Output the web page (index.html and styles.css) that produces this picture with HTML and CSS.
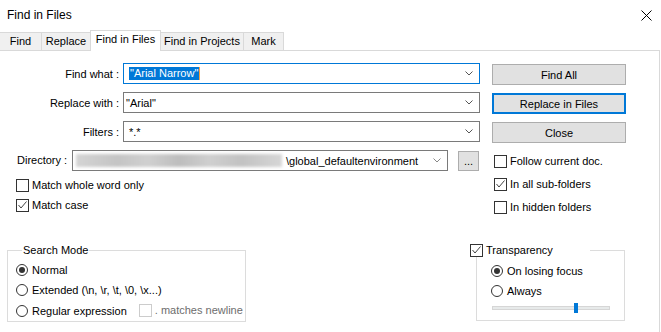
FILE: index.html
```html
<!DOCTYPE html>
<html lang="en">

<head>
    <meta charset="UTF-8">
    <meta name="viewport" content="width=device-width, initial-scale=1.0">
    <title>Find in Files</title>
    <link rel="stylesheet" href="styles.css">
</head>

<body>
    <div class="dialog">
        <div class="titlebar">
            <span class="title">Find in Files</span>
            <svg class="close" width="11" height="11" viewBox="0 0 11 11">
                <path d="M0.5 0.5 L10.5 10.5 M10.5 0.5 L0.5 10.5" stroke="#000" stroke-width="1" fill="none" />
            </svg>
        </div>

        <div class="tabs">
            <div class="tab w-find">Find</div>
            <div class="tab w-replace">Replace</div>
            <div class="tab active w-files">Find in Files</div>
            <div class="tab w-projects">Find in Projects</div>
            <div class="tab w-mark">Mark</div>
        </div>

        <div class="panel">
            <div class="fields">
                <label class="lbl">Find what :</label>
                <div class="combo focus">
                    <span class="sel">"Arial Narrow"</span><span class="caret"></span>
                    <svg class="chev" width="8" height="5" viewBox="0 0 8 5"><path d="M0.5 0.5 L4 4 L7.5 0.5" stroke="#555" fill="none" /></svg>
                </div>
                <button class="btn">Find All</button>

                <label class="lbl">Replace with :</label>
                <div class="combo tight">
                    <span>"Arial"</span>
                    <svg class="chev" width="8" height="5" viewBox="0 0 8 5"><path d="M0.5 0.5 L4 4 L7.5 0.5" stroke="#555" fill="none" /></svg>
                </div>
                <button class="btn default">Replace in Files</button>

                <label class="lbl">Filters :</label>
                <div class="combo">
                    <span>*.*</span>
                    <svg class="chev" width="8" height="5" viewBox="0 0 8 5"><path d="M0.5 0.5 L4 4 L7.5 0.5" stroke="#555" fill="none" /></svg>
                </div>
                <button class="btn">Close</button>
            </div>

            <div class="middle">
                <div class="left">
                    <div class="dir-row">
                        <label class="dir-lbl">Directory :</label>
                        <div class="combo dir">
                            <span class="blurred"></span>
                            <span class="path">\global_defaultenvironment</span>
                            <svg class="chev" width="8" height="5" viewBox="0 0 8 5"><path d="M0.5 0.5 L4 4 L7.5 0.5" stroke="#888" fill="none" /></svg>
                        </div>
                        <button class="btn dots">...</button>
                    </div>
                    <div class="checks left-checks">
                        <label class="check"><span class="box"></span>Match whole word only</label>
                        <label class="check"><span class="box"><svg width="11" height="11" viewBox="0 0 11 11"><path d="M1.5 5 L4 8 L9.5 1.5" stroke="#444" fill="none" /></svg></span>Match case</label>
                    </div>
                </div>
                <div class="checks right-checks">
                    <label class="check"><span class="box"></span>Follow current doc.</label>
                    <label class="check"><span class="box"><svg width="11" height="11" viewBox="0 0 11 11"><path d="M1.5 5 L4 8 L9.5 1.5" stroke="#444" fill="none" /></svg></span>In all sub-folders</label>
                    <label class="check"><span class="box"></span>In hidden folders</label>
                </div>
            </div>

            <div class="bottom">
                <fieldset class="group mode">
                    <legend>Search Mode</legend>
                    <div class="radios">
                        <label class="radio"><span class="dot on"></span>Normal</label>
                        <label class="radio"><span class="dot"></span>Extended (\n, \r, \t, \0, \x...)</label>
                        <div class="regex-row">
                            <label class="radio"><span class="dot"></span>Regular expression</label>
                            <label class="check disabled"><span class="box"></span>. matches newline</label>
                        </div>
                    </div>
                </fieldset>

                <div class="trans">
                    <div class="trans-head">
                        <label class="check trans-check"><span class="box"><svg width="11" height="11" viewBox="0 0 11 11"><path d="M1.5 5 L4 8 L9.5 1.5" stroke="#444" fill="none" /></svg></span>Transparency</label>
                        <span class="trans-line"></span>
                    </div>
                    <div class="trans-body">
                        <div class="radios">
                            <label class="radio"><span class="dot on"></span>On losing focus</label>
                            <label class="radio"><span class="dot"></span>Always</label>
                        </div>
                        <div class="slider"><span class="thumb"></span></div>
                    </div>
                </div>
            </div>
        </div>
    </div>
</body>

</html>
```

FILE: styles.css
```css
* {
    box-sizing: border-box;
}

body {
    margin: 0;
    background-color: white;
    font-family: "Liberation Sans", Arial, sans-serif;
    font-size: 11px;
    color: black;
    overflow: hidden;
}

.dialog {
    width: 661px;
    height: 332px;
}

.titlebar {
    height: 30px;
    display: flex;
    align-items: center;
    justify-content: space-between;
    padding: 0 9px 0 7px;
}

.title {
    font-size: 12px;
}

/* tabs */
.tabs {
    display: flex;
    align-items: flex-end;
    height: 20px;
    position: relative;
    z-index: 1;
}

.tab {
    height: 18px;
    line-height: 17px;
    text-align: center;
    background-color: #f0f0f0;
    border: 1px solid #d9d9d9;
    border-bottom: none;
    border-left: none;
}

.tab.active {
    height: 21px;
    line-height: 17px;
    margin-bottom: -1px;
    background-color: white;
    border-left: 1px solid #d9d9d9;
    margin-left: -1px;
}

.w-find { width: 42px; }
.w-replace { width: 49px; }
.w-files { width: 71px; }
.w-projects { width: 83px; }
.w-mark { width: 40px; }

.panel {
    width: 660px;
    height: 290px;
    border-top: 1px solid #d9d9d9;
    border-right: 1px solid #d9d9d9;
    padding-top: 12px;
}

/* find / replace / filters */
.fields {
    display: grid;
    grid-template-columns: 119px 357px 142px;
    grid-auto-rows: 21px;
    column-gap: 4px;
    row-gap: 8px;
}

.lbl {
    text-align: right;
    align-self: center;
}

.combo {
    position: relative;
    display: flex;
    align-items: center;
    height: 21px;
    border: 1px solid #7a7a7a;
    padding: 0 6px 0 5px;
    white-space: nowrap;
}

.combo.tight {
    padding-left: 2px;
}

.combo.focus {
    border-color: #0078d7;
}

.combo .chev {
    margin-left: auto;
}

.sel {
    background-color: #0078d7;
    color: white;
    line-height: 13px;
    padding: 0 1px;
}

.caret {
    width: 1px;
    height: 13px;
    background-color: #f7a040;
}

.btn {
    margin: 1px 0 0 8px;
    height: 21px;
    background-color: #e1e1e1;
    border: 1px solid #adadad;
    font-family: inherit;
    font-size: 11px;
    color: black;
    padding: 0;
}

.btn.default {
    border: 2px solid #0078d7;
}

/* directory and options */
.middle {
    display: flex;
    margin-top: 8px;
}

.left {
    width: 494px;
}

.dir-row {
    display: flex;
    align-items: flex-start;
    padding-left: 17px;
}

.dir-lbl {
    width: 55px;
    line-height: 21px;
}

.combo.dir {
    width: 376px;
    padding-left: 3px;
}

.blurred {
    width: 206px;
    height: 13px;
    background: linear-gradient(90deg, #d4d4d4, #c4c4c4 20%, #d0d0d0 35%, #bdbdbd 50%, #cfcfcf 65%, #c2c2c2 80%, #d6d6d6);
    filter: blur(1.5px);
}

.path {
    margin-left: 4px;
}

.btn.dots {
    width: 21px;
    height: 20px;
    margin: 1px 0 0 10px;
    line-height: 14px;
}

.checks {
    display: flex;
    flex-direction: column;
}

.left-checks {
    padding-left: 16px;
    margin-top: 8px;
    gap: 7px;
}

.right-checks {
    padding-top: 5px;
    gap: 10px;
}

.check {
    display: flex;
    align-items: center;
    gap: 3px;
    height: 13px;
    line-height: 13px;
    white-space: nowrap;
}

.box {
    width: 13px;
    height: 13px;
    border: 1px solid #333;
    background-color: white;
    flex: none;
}

.box svg {
    display: block;
}

.check.disabled {
    color: #6d6d6d;
}

.check.disabled .box {
    border-color: #cccccc;
}

/* groups */
.bottom {
    display: flex;
    align-items: flex-start;
    margin-top: 30px;
}

.group {
    margin: 0;
    padding: 0;
    border: 1px solid #dcdcdc;
    min-width: 0;
}

.group legend {
    padding: 0 1px;
    line-height: 13px;
}

.mode {
    width: 239px;
    margin-left: 7px;
    padding: 7px 0 4px 8px;
}

.mode legend {
    margin-left: 6px;
}

.radios {
    display: flex;
    flex-direction: column;
    gap: 8px;
}

.radio {
    display: flex;
    align-items: center;
    gap: 4px;
    height: 12px;
    white-space: nowrap;
}

.dot {
    width: 12px;
    height: 12px;
    border: 1px solid #333;
    border-radius: 50%;
    display: flex;
    align-items: center;
    justify-content: center;
    flex: none;
}

.dot.on::after {
    content: "";
    width: 6px;
    height: 6px;
    border-radius: 50%;
    background-color: #333;
}

.regex-row {
    display: flex;
    align-items: center;
    gap: 12px;
}

.trans {
    width: 149px;
    margin-left: 230px;
}

.trans-head {
    display: flex;
    height: 13px;
    margin-left: -6px;
}

.trans-check {
    width: 120px;
}

.trans-line {
    flex: 1;
    margin-top: 6px;
    border-top: 1px solid #dcdcdc;
    border-right: 1px solid #dcdcdc;
}

.trans-body {
    height: 64px;
    border: 1px solid #dcdcdc;
    border-top: none;
    padding: 8px 0 0 14px;
}

.slider {
    position: relative;
    width: 118px;
    height: 4px;
    margin: 9px 0 0 1px;
    background-color: #e7eaea;
    border: 1px solid #d6d6d6;
}

.thumb {
    position: absolute;
    left: 81px;
    top: -4px;
    width: 4px;
    height: 10px;
    background-color: #0078d7;
}
```
